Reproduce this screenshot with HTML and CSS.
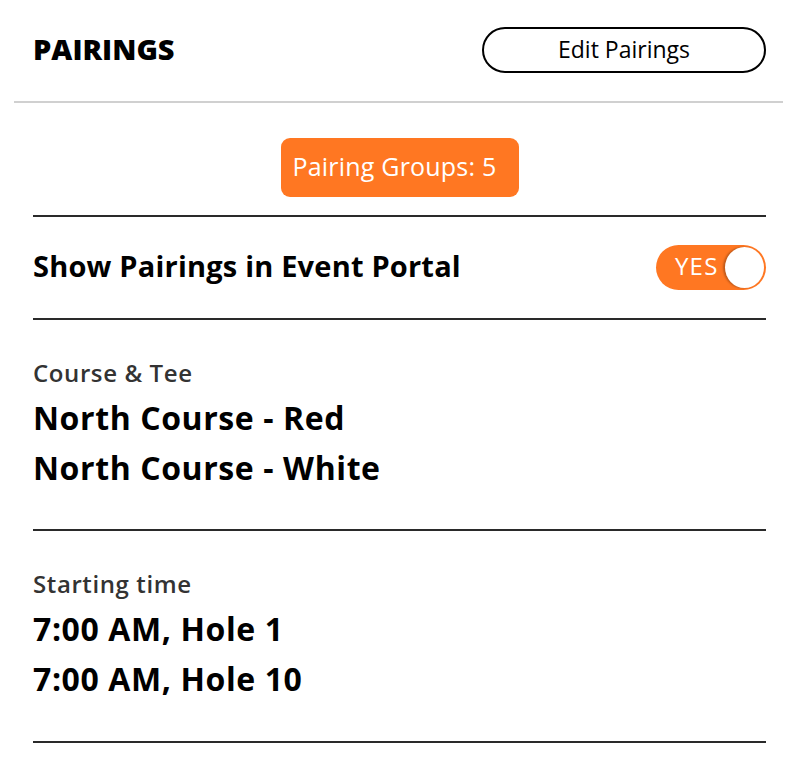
FILE: index.html
```html
<!DOCTYPE html>
<html>
<head>
<meta charset="utf-8">
<link rel="stylesheet" href="styles.css">
</head>
<body>
<div class="panel">
  <header class="header">
    <h1 class="title">PAIRINGS</h1>
    <button class="edit-btn">Edit Pairings</button>
  </header>
  <div class="content">
    <div class="badge-row">
      <span class="badge">Pairing Groups: 5</span>
    </div>
    <div class="row toggle-row">
      <span class="toggle-label">Show Pairings in Event Portal</span>
      <span class="toggle"><span class="toggle-text">YES</span><span class="knob"></span></span>
    </div>
    <div class="section">
      <div class="label">Course &amp; Tee</div>
      <div class="value">North Course - Red</div>
      <div class="value">North Course - White</div>
    </div>
    <div class="section">
      <div class="label">Starting time</div>
      <div class="value">7:00 AM, Hole 1</div>
      <div class="value">7:00 AM, Hole 10</div>
    </div>
  </div>
</div>
</body>
</html>
```
FILE: styles.css
```css
* { box-sizing: border-box; }
html, body { margin: 0; padding: 0; background: #fff; }
body { font-family: "Open Sans", "Liberation Sans", sans-serif; color: #000; }
.panel { width: 794px; padding: 0 11px 0 14px; }
.header {
  display: flex; align-items: center; justify-content: space-between;
  height: 103px; padding: 0 17px 0 19px;
  border-bottom: 2px solid #d0d0d0;
}
.title { margin: -4px 0 0; font-size: 29px; font-weight: 800; letter-spacing: 0; line-height: 40px; }
.edit-btn {
  width: 284px; height: 46px; border: 2px solid #000; border-radius: 23px;
  background: #fff; font-family: inherit; font-size: 23px; color: #000;
  margin-top: -2px; padding: 0 0 2px;
}
.content { padding: 0 17px 0 19px; }
.badge-row {
  display: flex; justify-content: center; padding: 35px 0 18px;
  border-bottom: 2px solid #2a2a2a;
}
.badge {
  background: #ff7722; color: #fff; border-radius: 9px;
  width: 238px; height: 59px; display: flex; align-items: center;
  padding: 0 0 4px 12px; font-size: 25px; letter-spacing: 0.2px;
}
.toggle-row {
  display: flex; align-items: center; justify-content: space-between;
  height: 103px; border-bottom: 2px solid #2a2a2a;
}
.toggle-label { font-size: 29px; font-weight: 700; letter-spacing: 0.2px; margin-top: -4px; line-height: 40px; }
.toggle {
  width: 110px; height: 45px; border-radius: 23px; background: #ff7722;
  display: flex; align-items: center; justify-content: space-between;
  padding: 0 2px 0 19px; margin-top: -1px;
}
.toggle-text { color: #fff; font-size: 24px; letter-spacing: 1.2px; margin-bottom: 2px; line-height: 30px; }
.knob {
  width: 39px; height: 41px; border-radius: 50%; background: #fff;
  box-shadow: -2px 0 2px rgba(0,0,0,0.25);
}
.section { padding: 38px 0 0; height: 211px; border-bottom: 2px solid #2a2a2a; }
.label { font-size: 24px; font-weight: 650; color: #333; line-height: 30px; margin-bottom: 5px; letter-spacing: 0.6px; }
.value { font-size: 32px; font-weight: 700; line-height: 50px; letter-spacing: 0.6px; }
.section + .section { height: 212px; }
```
